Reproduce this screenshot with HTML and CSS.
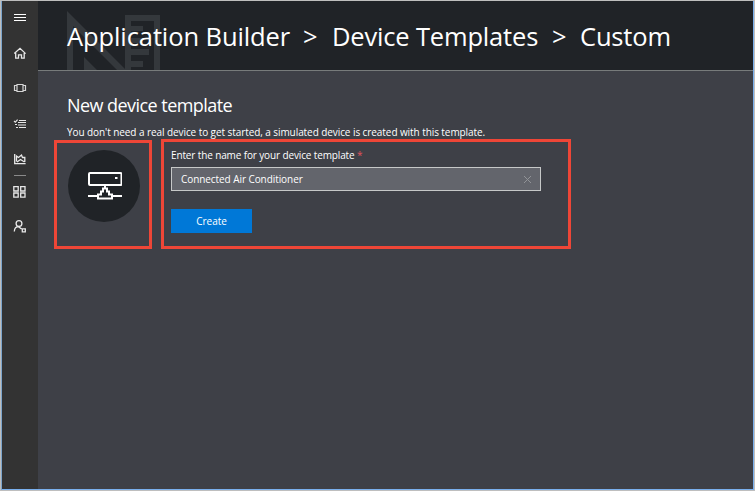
FILE: index.html
```html
<!DOCTYPE html>
<html lang="en">
<head>
<meta charset="utf-8">
<title>Application Builder</title>
<link rel="stylesheet" href="styles.css">
</head>
<body>
<div class="window">
  <nav class="rail">
    <svg class="rail-icons" width="36" height="240" viewBox="2 1 36 240" fill="none" stroke="#e8e8e8" stroke-width="1.3">
      <path d="M14 14.500H26M14 17.500H26M14 20.500H26" stroke="#fff" stroke-width="1"/>
      <path d="M14.300 53.600L20 48.300L25.600 53.600M15.700 53V58.200H18.500V54.800H21.500V58.200H24.200V53"/>
      <path d="M17 84.500H23V91.500H17ZM17 85.500H14.500V90.500H17M23 85.500H25.500V90.500H23" stroke="#d5d5d5" stroke-width="1.200"/>
      <path d="M14 121L15.300 122.200L17.600 119.600M15 124.500H17M16 127.500H18M19 120.500H26M18 122.500H26M18 125H26M19 127.500H26" stroke-width="1.1"/>
      <path d="M14.700 154V163.700H25.600"/>
      <path d="M16.500 161.500V156L18.500 157.500L21.500 155L22.500 157.500H24.800V162M17 162L20.500 159.500L24.500 162"/>
      <path d="M14 175.500H26" stroke="#8a8a8a" stroke-width="1"/>
      <path d="M13.800 186.700H18.200V191H13.800ZM20.700 186.700H25V191H20.700ZM13.800 193H18.200V197.200H13.800ZM20.700 193H25V197.200H20.700Z"/>
      <circle cx="19" cy="223.600" r="2.900"/>
      <path d="M14.300 231.500C14.500 228.500 16.200 226.700 18.600 226.700L21.500 229M22.300 228.800H25.300V231.800H22.300Z"/>
    </svg>
  </nav>
  <div class="page">
    <header class="banner">
      <svg class="banner-art" width="94" height="60" viewBox="66 10 94 60" aria-hidden="true">
        <path fill="#34383c" fill-rule="evenodd" d="M67 11L126 70H67ZM73 26V70H84V57L97 70H117Z"/>
        <path fill="#34383c" fill-rule="evenodd" d="M125 15H160V70H125ZM131 21V70H154V21Z"/>
        <path fill="#34383c" d="M131 26H143V31H131ZM131 38H143V43H131ZM131 49H149V55H131ZM131 61H143V67H131Z"/>
      </svg>
      <h1 class="crumbs">
        <span class="crumb app">Application Builder</span>
        <span class="sep">&gt;</span>
        <span class="crumb templates">Device Templates</span>
        <span class="sep">&gt;</span>
        <span class="crumb custom">Custom</span>
      </h1>
    </header>
    <main class="content">
      <h2 class="heading">New device template</h2>
      <p class="intro">You don't need a real device to get started, a simulated device is created with this template.</p>
      <div class="panels">
        <section class="panel picture">
          <div class="disc">
            <svg width="36" height="32" viewBox="86 170 36 32" fill="none" stroke="#fff" stroke-width="2">
              <rect x="89" y="173" width="32.500" height="12" rx="1"/>
              <path d="M115 178H117.500"/>
              <path d="M105 186V189M88 196H98M112 196H122M98 198.500V194.500H101V191.500H103V188.500H107V191.500H109V194.500H112V198.500Z"/>
            </svg>
          </div>
        </section>
        <section class="panel form">
          <div class="label">Enter the name for your device template <span class="required">*</span></div>
          <div class="field">
            <span>Connected Air Conditioner</span>
            <svg width="9" height="9" viewBox="0 0 9 9" stroke="#919397" stroke-width="1"><path d="M1 1L8 8M8 1L1 8"/></svg>
          </div>
          <button class="create">Create</button>
        </section>
      </div>
    </main>
  </div>
</div>
</body>
</html>
```
FILE: styles.css
```css
* { box-sizing: border-box; }
body { margin: 0; background: #bfbfbf; font-family: "Open Sans", sans-serif; color: #fff; }
.window {
  display: flex;
  width: 755px;
  height: 491px;
  border: 1px solid #bebebe;
  background: #3e4047;
  box-shadow: inset 1px 0 #7da5cc, inset -1px -1px #7ab0ee;
  padding: 0 1px 1px;
  overflow: hidden;
}
.rail { width: 36px; background: #333; flex: none; }
.rail-icons { display: block; }
.page { flex: 1; background: #3e4047; }
.banner {
  position: relative;
  height: 70px;
  background: #202327;
  border-bottom: 1px solid #777b7b;
}
.banner-art { position: absolute; left: 28px; top: 9px; }
.crumbs {
  position: relative;
  display: grid;
  grid-template-columns: 236px 29px 220px 28px 1fr;
  margin: 0;
  padding: 16px 0 0 29px;
  font-size: 25.5px;
  line-height: 38px;
  font-weight: 400;
  white-space: nowrap;
}
.app { letter-spacing: -0.1px; }
.templates, .custom { letter-spacing: -0.17px; }
.content { padding: 21px 0 0 16px; }
.heading { margin: 0 0 0 13px; font-size: 18px; line-height: 26px; font-weight: 400; letter-spacing: -0.55px; }
.intro { margin: 7px 0 0 13px; font-size: 10px; line-height: 14px; font-weight: 500; letter-spacing: -0.075px; white-space: nowrap; }
.panels { display: flex; gap: 9px; }
.panel { border: 3px solid #ee4637; }
.picture { width: 98px; height: 109px; margin-top: 1px; padding: 7px 0 0 11px; }
.disc {
  display: grid;
  place-items: center;
  width: 72px;
  height: 72px;
  border-radius: 50%;
  background: #202327;
}
.form { width: 410px; height: 110px; padding: 6px 0 0 7px; font-size: 10px; font-weight: 500; }
.label { line-height: 14px; letter-spacing: -0.13px; white-space: nowrap; }
.field {
  display: flex;
  align-items: center;
  justify-content: space-between;
  width: 370px;
  height: 24px;
  margin-top: 5px;
  padding: 0 8px 0 9px;
  border: 1px solid #c6c8c8;
  background: #63656c;
  letter-spacing: -0.07px;
}
.required { color: #e2525b; }
.create {
  display: block;
  width: 81px;
  height: 24px;
  margin-top: 18px;
  padding: 0;
  border: 0;
  background: #0078d7;
  color: #fff;
  font: inherit;
}
```
